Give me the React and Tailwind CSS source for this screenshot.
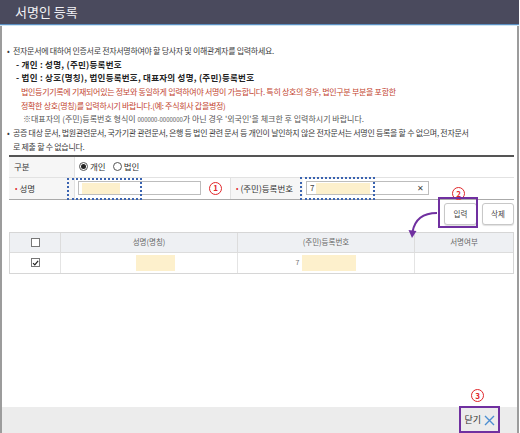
import React from 'react'

const font = "font-['Noto_Sans_CJK_KR','Noto_Sans',sans-serif]"

function Circled({ n, className = '' }) {
  return (
    <div className={`w-[13px] h-[13px] rounded-full border-[1.5px] border-[#e0262a] text-[#e0262a] text-[8px] font-bold flex items-center justify-center leading-none ${className}`}>
      {n}
    </div>
  )
}

function Radio({ on }) {
  return (
    <span className="w-[9px] h-[9px] rounded-full border border-[#555] bg-white flex items-center justify-center">
      {on && <span className="w-[5px] h-[5px] rounded-full bg-[#222]" />}
    </span>
  )
}

function Check({ on }) {
  return (
    <span className="w-[9px] h-[9px] border border-[#777] bg-white flex items-center justify-center">
      {on && (
        <svg width="8" height="8" viewBox="0 0 8 8"><path d="M1.2 4.2 L3.2 6.2 L7 1.6" fill="none" stroke="#222" strokeWidth="1.4" /></svg>
      )}
    </span>
  )
}

export default function App() {
  const line = 'h-[13.7px] leading-[13.7px] whitespace-nowrap'
  return (
    <div className={`w-[520px] h-[433px] bg-white relative overflow-hidden ${font}`}>
      <div className="w-[519px]">
        {/* title */}
        <div className="h-[24px] bg-[#4a4a5d] flex items-center pl-[15px] text-[13px] text-[#f2f2f5]">서명인 등록</div>
        <div className="h-[1px] bg-[#5b8fc2]" />
        <div className="h-[1px] bg-[#cfe5f2]" />

        <div className="h-[407px] border-x-2 border-[#9c9c9c] flex flex-col">
          <div className="flex-1 px-[5px] pt-[18px]">
            {/* notices */}
            <div className="text-[8px] tracking-[-0.3px] text-[#3a3a3a]">
              <div className={`${line} flex`}><span className="w-[6px]">•</span>전자문서에 대하여 인증서로 전자서명하여야 할 당사자 및 이해관계자를 입력하세요.</div>
              <div className={`${line} pl-[9px] text-[8.5px] tracking-[0.25px] font-bold text-[#222]`}>- 개인 : 성명, (주민)등록번호</div>
              <div className={`${line} pl-[9px] text-[8.5px] tracking-[0.25px] font-bold text-[#222]`}>- 법인 : 상호(명칭), 법인등록번호, 대표자의 성명, (주민)등록번호</div>
              <div className={`${line} pl-[14px] text-[#c2432e]`}>법인등기기록에 기재되어있는 정보와 동일하게 입력하여야 서명이 가능합니다. 특히 상호의 경우, 법인구분 부분을 포함한</div>
              <div className={`${line} pl-[14px] text-[#c2432e]`}>정확한 상호(명칭)를 입력하시기 바랍니다.(예: 주식회사 갑을병정)</div>
              <div className={`${line} pl-[16px] text-[#555] tracking-[0px]`}>※대표자의 (주민)등록번호 형식이 <span className="text-[6px]">000000-0000000</span>가 아닌 경우 '외국인'을 체크한 후 입력하시기 바랍니다.</div>
              <div className={`${line} flex`}><span className="w-[6px]">•</span>공증 대상 문서, 법원관련문서, 국가기관 관련문서, 은행 등 법인 관련 문서 등 개인이 날인하지 않은 전자문서는 서명인 등록을 할 수 없으며, 전자문서</div>
              <div className={`${line} pl-[6px]`}>로 제출 할 수 없습니다.</div>
            </div>

            {/* form */}
            <div className="mt-[1px] ml-[2px] w-[505px] border-t-2 border-[#555] border-b border-b-[#aaa] text-[8.5px] text-[#333]">
              <div className="h-[21px] flex border-b border-[#e2e2e2]">
                <div className="w-[66px] bg-[#f6f6f6] border-r border-[#e2e2e2] flex items-center pl-[5px]">구분</div>
                <div className="flex items-center pl-[4px] gap-[2px]">
                  <Radio on /><span className="mr-[5px]">개인</span>
                  <Radio /><span>법인</span>
                </div>
              </div>
              <div className="h-[21px] flex items-center">
                <div className="w-[66px] h-full bg-[#f6f6f6] border-r border-[#e2e2e2] flex items-center pl-[6px]">
                  <span className="text-[#e0262a] text-[7px] mr-[2px]">•</span>성명
                </div>
                <div className="ml-[3px] w-[123px] h-[14px] border border-[#bdbdbd] bg-white flex items-center px-[3px]">
                  <span className="w-[38px] h-[11px] bg-[#fdf0cc]" />
                </div>
                <Circled n="1" className="ml-[8px]" />
                <div className="ml-[8px] w-[73px] h-full bg-[#f6f6f6] border-l border-[#e2e2e2] flex items-center pl-[5px] whitespace-nowrap">
                  <span className="text-[#e0262a] text-[7px] mr-[2px]">•</span>(주민)등록번호
                </div>
                <div className="ml-[3px] w-[123px] h-[14px] border border-[#bdbdbd] bg-white flex items-center pl-[3px] pr-[4px] text-[8px]">
                  <span className="text-[#444]">7</span>
                  <span className="w-[54px] h-[11px] bg-[#fdf0cc] ml-[2px]" />
                  <span className="ml-auto text-[#444] text-[8px]">✕</span>
                </div>
              </div>
            </div>

            {/* buttons */}
            <div className="mt-[3px] w-[507px] flex justify-end gap-[5px] text-[7.5px] text-[#444]">
              <div className="w-[33px] h-[22px] rounded-[3px] border border-[#c8c8c8] bg-white shadow-[0_1px_1px_rgba(0,0,0,0.12)] flex items-center justify-center">입력</div>
              <div className="w-[32px] h-[22px] rounded-[3px] border border-[#c8c8c8] bg-white shadow-[0_1px_1px_rgba(0,0,0,0.12)] flex items-center justify-center">삭제</div>
            </div>

            {/* table */}
            <div className="mt-[7px] ml-[2px] w-[505px] border border-[#d6d6d6] text-[7.5px] text-[#666]">
              <div className="h-[20px] flex bg-[#eef0f3] border-b border-[#dcdcdc]">
                <div className="w-[51px] flex items-center justify-center border-r border-[#dcdcdc]"><Check /></div>
                <div className="w-[177px] flex items-center justify-center border-r border-[#dcdcdc]">성명(명칭)</div>
                <div className="w-[177px] flex items-center justify-center border-r border-[#dcdcdc]">(주민)등록번호</div>
                <div className="flex-1 flex items-center justify-center">서명여부</div>
              </div>
              <div className="h-[20px] flex bg-white">
                <div className="w-[51px] flex items-center justify-center border-r border-[#e4e4e4]"><Check on /></div>
                <div className="w-[177px] flex items-center justify-center border-r border-[#e4e4e4]">
                  <span className="ml-[12px] w-[39px] h-[16px] bg-[#fdf0cc]" />
                </div>
                <div className="w-[177px] flex items-center justify-center border-r border-[#e4e4e4]">
                  <span className="text-[#777] text-[7px]">7</span>
                  <span className="ml-[3px] w-[54px] h-[16px] bg-[#fdf0cc]" />
                </div>
                <div className="flex-1" />
              </div>
            </div>
          </div>

          {/* footer */}
          <div className="h-[26px] bg-[#ececec] flex items-center justify-end pr-[22px]">
            <span className="text-[9px] text-[#333]">닫기</span>
            <svg className="ml-[3px]" width="11" height="11" viewBox="0 0 11 11">
              <path d="M1 1 L10 10 M10 1 L1 10" stroke="#4d8fd1" strokeWidth="1.4" />
            </svg>
          </div>
        </div>
      </div>

      {/* annotations */}
      <div className="absolute left-[67px] top-[178px] w-[75px] h-[22px] border-2 border-dotted border-[#3a63b0]" />
      <div className="absolute left-[300px] top-[177px] w-[75px] h-[23px] border-2 border-dotted border-[#3a63b0]" />
      <Circled n="2" className="absolute left-[452px] top-[187px] bg-white" />
      <div className="absolute left-[438px] top-[197px] w-[40px] h-[31px] border-2 border-[#7030a0]" />
      <svg className="absolute left-[400px] top-[205px]" width="40" height="36" viewBox="0 0 40 36">
        <path d="M37 8 C 24 8, 15 13, 12.5 27" fill="none" stroke="#7030a0" strokeWidth="2" />
        <path d="M8.5 25 L12 33 L16.5 26 Z" fill="#7030a0" />
      </svg>
      <Circled n="3" className="absolute left-[471px] top-[389px]" />
      <div className="absolute left-[459px] top-[406px] w-[41px] h-[27px] border-2 border-[#7030a0]" />
    </div>
  )
}
